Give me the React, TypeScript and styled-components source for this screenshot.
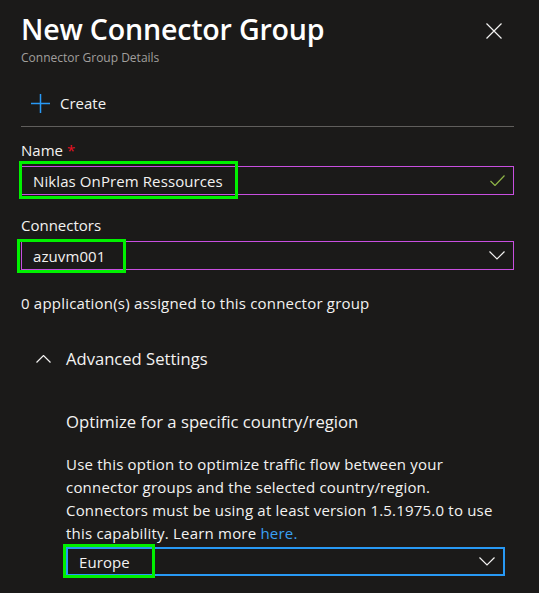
import React from 'react';
import styled, { createGlobalStyle } from 'styled-components';

const Global = createGlobalStyle`
  html, body { margin: 0; padding: 0; background: #1b1a19; }
  body { font-family: "Open Sans", "Noto Sans", sans-serif; color: #f3f2f1; }
`;

const Panel = styled.div`
  width: 539px;
  height: 593px;
  box-sizing: border-box;
  padding: 10px 25px 0 21px;
  overflow: hidden;
  background: #1b1a19;
`;

const Header = styled.header`
  display: flex;
  justify-content: space-between;
  align-items: flex-start;
`;

const TitleBlock = styled.div`
  display: flex;
  flex-direction: column;
`;

const Title = styled.h1`
  margin: 0;
  font-size: 28.6px;
  font-weight: 600;
  line-height: 38px;
  color: #ffffff;
  letter-spacing: -0.2px;
`;

const Subtitle = styled.div`
  font-size: 12px;
  line-height: 20px;
  color: #a19f9d;
`;

const CloseButton = styled.button`
  background: none;
  border: none;
  padding: 0;
  margin: 13px 12px 0 0;
  width: 16px;
  height: 16px;
  display: flex;
  color: #f3f2f1;
`;

const Toolbar = styled.div`
  display: flex;
  align-items: center;
  gap: 10px;
  height: 46px;
  margin-top: 12px;
  padding-left: 10px;
  border-bottom: 1px solid #605e5c;
`;

const ToolbarLabel = styled.span`
  font-size: 15px;
  color: #f3f2f1;
`;

const Field = styled.div<{ $top: number }>`
  display: flex;
  flex-direction: column;
  margin-top: ${(p) => p.$top}px;
`;

const Label = styled.label`
  font-size: 15px;
  line-height: 20px;
  height: 20px;
  margin-bottom: 6px;
  color: #f3f2f1;
`;

const Required = styled.span`
  color: #e81123;
  margin-left: 4px;
`;

const InputBox = styled.div<{ $focus?: boolean }>`
  position: relative;
  display: flex;
  align-items: center;
  justify-content: space-between;
  height: 29px;
  box-sizing: border-box;
  padding: 0 8px 0 11px;
  border: ${(p) => (p.$focus ? '2px solid #2899f5' : '1px solid #c84fe0')};
  color: #f3f2f1;
  font-size: 15px;
  letter-spacing: 0.1px;
`;

const Highlight = styled.div<{ $l: number; $t: number; $w: number; $h: number }>`
  position: absolute;
  left: ${(p) => p.$l}px;
  top: ${(p) => p.$t}px;
  width: ${(p) => p.$w}px;
  height: ${(p) => p.$h}px;
  box-sizing: border-box;
  border: 3px solid #00f000;
  pointer-events: none;
`;

const Info = styled.p`
  margin: 23px 0 0;
  font-size: 15px;
  letter-spacing: 0.2px;
  line-height: 20px;
  color: #f3f2f1;
`;

const Section = styled.section`
  display: flex;
  flex-direction: column;
  margin-top: 34px;
`;

const SectionHeader = styled.div`
  display: flex;
  align-items: center;
  gap: 15px;
  padding-left: 15px;
  font-size: 16.6px;
  line-height: 24px;
  color: #f3f2f1;
`;

const SectionBody = styled.div`
  display: flex;
  flex-direction: column;
  padding-left: 45px;
  margin-top: 39px;
`;

const SubHeading = styled.div`
  font-size: 16.7px;
  line-height: 24px;
  color: #f3f2f1;
`;

const Description = styled.p`
  margin: 19px 10px 0 0;
  font-size: 15px;
  letter-spacing: 0.2px;
  line-height: 23px;
  color: #f3f2f1;
`;

const Link = styled.a`
  color: #3aa0f3;
  text-decoration: none;
`;

const SelectWrap = styled.div`
  margin-top: 2px;
  margin-right: 9px;
`;

const Icon = ({ children, w, h, color = '#f3f2f1' }: { children: React.ReactNode; w: number; h: number; color?: string }) => (
  <svg width={w} height={h} viewBox={`0 0 ${w} ${h}`} fill="none" stroke={color} strokeWidth={1.2}>
    {children}
  </svg>
);

const ChevronDown = () => (
  <Icon w={16} h={9}>
    <path d="M0.5 0.5 L8 8 L15.5 0.5" />
  </Icon>
);

export default function App() {
  return (
    <>
      <Global />
      <Panel>
        <Header>
          <TitleBlock>
            <Title>New Connector Group</Title>
            <Subtitle>Connector Group Details</Subtitle>
          </TitleBlock>
          <CloseButton aria-label="Close">
            <Icon w={16} h={16}>
              <path d="M0.5 0.5 L15.5 15.5 M15.5 0.5 L0.5 15.5" />
            </Icon>
          </CloseButton>
        </Header>
        <Toolbar>
          <Icon w={19} h={19} color="#2899f5">
            <path d="M9.5 0 V19 M0 9.5 H19" strokeWidth={1.5} />
          </Icon>
          <ToolbarLabel>Create</ToolbarLabel>
        </Toolbar>
        <Field $top={13}>
          <Label>
            Name<Required>*</Required>
          </Label>
          <InputBox>
            <span>Niklas OnPrem Ressources</span>
            <Icon w={15} h={11} color="#8fb547">
              <path d="M0.5 6 L5 10.5 L14.5 0.5" />
            </Icon>
            <Highlight $l={-3} $t={-6} $w={219} $h={38} />
          </InputBox>
        </Field>
        <Field $top={20}>
          <Label>Connectors</Label>
          <InputBox>
            <span>azuvm001</span>
            <ChevronDown />
            <Highlight $l={-5} $t={-3} $w={109} $h={34} />
          </InputBox>
        </Field>
        <Info>0 application(s) assigned to this connector group</Info>
        <Section>
          <SectionHeader>
            <Icon w={15} h={8}>
              <path d="M0.5 7.5 L7.5 0.5 L14.5 7.5" />
            </Icon>
            <span>Advanced Settings</span>
          </SectionHeader>
          <SectionBody>
            <SubHeading>Optimize for a specific country/region</SubHeading>
            <Description>
              Use this option to optimize traffic flow between your connector groups and the selected
              country/region. Connectors must be using at least version 1.5.1975.0 to use this capability.
              Learn more <Link href="#">here.</Link>
            </Description>
            <SelectWrap>
              <InputBox $focus>
                <span>Europe</span>
                <ChevronDown />
                <Highlight $l={-5} $t={-5} $w={92} $h={34} />
              </InputBox>
            </SelectWrap>
          </SectionBody>
        </Section>
      </Panel>
    </>
  );
}
